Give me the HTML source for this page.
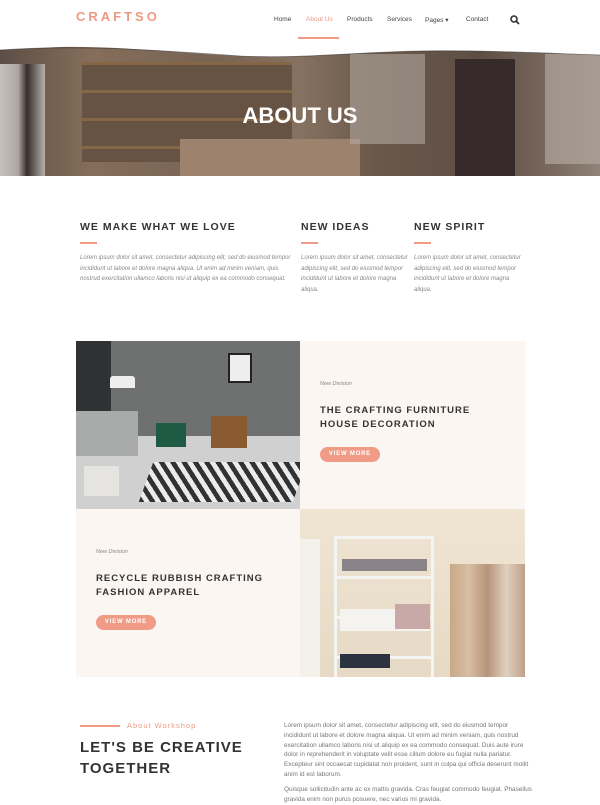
<!DOCTYPE html>
<html><head><meta charset="utf-8"><style>
*{margin:0;padding:0;box-sizing:border-box}
body{width:600px;height:800px;overflow:hidden;background:#fff;font-family:"Liberation Sans",sans-serif;position:relative}
.abs{position:absolute}
.logo{left:76px;top:9px;font-size:13px;font-weight:bold;letter-spacing:3px;color:#ee9a84}
.nav{top:16px;font-size:6.5px;color:#444}
.h{font-weight:bold;color:#333;letter-spacing:1px}
.p{font-style:italic;font-size:6px;line-height:10.5px;color:#888}
.bar{height:2px;background:#ee9a84;width:17px}
.btn{background:#ef9b86;color:#fff;font-size:6px;font-weight:bold;letter-spacing:.8px;border-radius:8px;width:60px;height:15px;line-height:15px;text-align:center}
.small{font-style:italic;font-size:5.5px;color:#888}
</style></head><body>
<div class="abs logo">CRAFTSO</div>
<div class="abs nav" style="left:274px">Home</div>
<div class="abs nav" style="left:306px;color:#ee9a84">About Us</div>
<div class="abs nav" style="left:347px">Products</div>
<div class="abs nav" style="left:387px">Services</div>
<div class="abs nav" style="left:425px">Pages ▾</div>
<div class="abs nav" style="left:466px">Contact</div>
<svg class="abs" style="left:510px;top:15px" width="10" height="10" viewBox="0 0 10 10"><circle cx="4" cy="4" r="3" fill="none" stroke="#333" stroke-width="1.6"/><path d="M6.2 6.2L9 9" stroke="#333" stroke-width="1.8"/></svg>
<div class="abs" style="left:298px;top:37px;width:41px;height:2px;background:#ee9a84"></div>
<!-- hero -->
<div class="abs" style="left:0;top:44px;width:600px;height:132px;background:linear-gradient(90deg,#6a5a50 0%,#9a8068 15%,#8b7360 35%,#9c8570 50%,#7b6756 62%,#6a5a4e 80%,#8c7a6c 92%,#a89a8c 100%);overflow:hidden">
 <div class="abs" style="left:0;top:20px;width:45px;height:112px;background:linear-gradient(90deg,#e8e4e0,#cfc6c0 40%,#3a3230 60%,#d8d2cc)"></div>
 <div class="abs" style="left:82px;top:18px;width:210px;height:100px;background:repeating-linear-gradient(180deg,#9a7850 0 3px,#76604e 3px 28px)"></div>
 <div class="abs" style="left:180px;top:95px;width:180px;height:37px;background:#b89a80"></div>
 <div class="abs" style="left:350px;top:10px;width:75px;height:90px;background:#cfc7bd;opacity:.6"></div>
 <div class="abs" style="left:455px;top:15px;width:60px;height:117px;background:#3a2e2e"></div>
 <div class="abs" style="left:545px;top:10px;width:55px;height:110px;background:#d0c6bc;opacity:.7"></div>
 <div class="abs" style="left:0;top:0;width:600px;height:132px;background:rgba(40,30,25,.18)"></div>
</div>
<svg class="abs" style="left:0;top:43px" width="600" height="18" viewBox="0 0 600 18"><path d="M0 0H600V12C540 10 480 7 420 8C360 9 300 16 240 13C180 10 120 3 60 4C40 5 20 6 0 7Z" fill="#fff"/><path d="M0 7C60 3 120 4 240 13C300 16 360 9 420 8C480 7 540 10 600 12" stroke="#333" stroke-width=".8" fill="none" opacity=".6"/></svg>
<div class="abs" style="left:0;top:103px;width:600px;text-align:center;color:#fff;font-size:22px;font-weight:bold">ABOUT US</div>
<!-- features -->
<div class="abs h" style="left:80px;top:221px;font-size:10.5px">WE MAKE WHAT WE LOVE</div>
<div class="abs h" style="left:301px;top:221px;font-size:10.5px">NEW IDEAS</div>
<div class="abs h" style="left:414px;top:221px;font-size:10.5px">NEW SPIRIT</div>
<div class="abs bar" style="left:80px;top:242px"></div>
<div class="abs bar" style="left:301px;top:242px"></div>
<div class="abs bar" style="left:414px;top:242px"></div>
<div class="abs p" style="left:80px;top:253px;width:215px">Lorem ipsum dolor sit amet, consectetur adipiscing elit, sed do eiusmod tempor incididunt ut labore et dolore magna aliqua. Ut enim ad minim veniam, quis nostrud exercitation ullamco laboris nisi ut aliquip ex ea commodo consequat.</div>
<div class="abs p" style="left:301px;top:253px;width:108px">Lorem ipsum dolor sit amet, consectetur adipiscing elit, sed do eiusmod tempor incididunt ut labore et dolore magna aliqua.</div>
<div class="abs p" style="left:414px;top:253px;width:108px">Lorem ipsum dolor sit amet, consectetur adipiscing elit, sed do eiusmod tempor incididunt ut labore et dolore magna aliqua.</div>
<!-- grid -->
<div class="abs" style="left:76px;top:341px;width:224px;height:168px;background:#6f7171;overflow:hidden">
 <div class="abs" style="left:0;top:0;width:35px;height:110px;background:#2f3233"></div>
 <div class="abs" style="left:0;top:95px;width:224px;height:73px;background:#cfd0cf"></div>
 <div class="abs" style="left:0;top:70px;width:62px;height:45px;background:#a9aaaa"></div>
 <div class="abs" style="left:80px;top:82px;width:30px;height:24px;background:#1f5a44"></div>
 <div class="abs" style="left:135px;top:75px;width:36px;height:32px;background:#8a5a30"></div>
 <div class="abs" style="left:152px;top:12px;width:24px;height:30px;background:#eee;border:2px solid #222"></div>
 <div class="abs" style="left:34px;top:35px;width:25px;height:12px;background:#eee;border-radius:3px 3px 0 0"></div>
 <div class="abs" style="left:70px;top:121px;width:154px;height:40px;background:repeating-linear-gradient(45deg,#222 0 4px,#eee 4px 8px),#eee;transform:skewX(-20deg);opacity:.9"></div>
 <div class="abs" style="left:8px;top:125px;width:35px;height:30px;background:#e6e4e0"></div>
</div>
<div class="abs" style="left:300px;top:341px;width:225px;height:168px;background:#fcf6f2"></div>
<div class="abs small" style="left:320px;top:381px">New Division</div>
<div class="abs h" style="left:320px;top:404px;font-size:9.5px;line-height:14px">THE CRAFTING FURNITURE<br>HOUSE DECORATION</div>
<div class="abs btn" style="left:320px;top:447px">VIEW MORE</div>
<div class="abs" style="left:76px;top:509px;width:224px;height:168px;background:#fcf6f2"></div>
<div class="abs small" style="left:96px;top:549px">New Division</div>
<div class="abs h" style="left:96px;top:572px;font-size:9.5px;line-height:14px">RECYCLE RUBBISH CRAFTING<br>FASHION APPAREL</div>
<div class="abs btn" style="left:96px;top:615px">VIEW MORE</div>
<div class="abs" style="left:300px;top:509px;width:225px;height:168px;background:linear-gradient(180deg,#efe5d2,#e6dac6);overflow:hidden">
 <div class="abs" style="left:0;top:30px;width:20px;height:138px;background:#f4f0ea"></div>
 <div class="abs" style="left:34px;top:27px;width:100px;height:141px;border-left:3px solid #f4f4f2;border-right:3px solid #f4f4f2;background:repeating-linear-gradient(180deg,#f4f4f2 0 3px,transparent 3px 40px)"></div>
 <div class="abs" style="left:42px;top:50px;width:85px;height:12px;background:#8a8488"></div>
 <div class="abs" style="left:40px;top:100px;width:90px;height:22px;background:#f5f3f0"></div>
 <div class="abs" style="left:95px;top:95px;width:35px;height:25px;background:#c9a8a8"></div>
 <div class="abs" style="left:40px;top:145px;width:50px;height:14px;background:#2c3340"></div>
 <div class="abs" style="left:150px;top:55px;width:75px;height:113px;background:linear-gradient(90deg,#c8a888,#d8bea4,#b89478,#e0d0c0,#c0a088)"></div>
</div>
<!-- bottom -->
<div class="abs" style="left:80px;top:725px;width:40px;height:2px;background:#ee9a84"></div>
<div class="abs" style="left:127px;top:721px;font-size:7.5px;color:#ee9a84;letter-spacing:1px">About Workshop</div>
<div class="abs h" style="left:80px;top:737px;font-size:15px;line-height:21px">LET'S BE CREATIVE<br>TOGETHER</div>
<div class="abs" style="left:284px;top:721px;width:250px;font-size:6.4px;line-height:9.8px;color:#777">Lorem ipsum dolor sit amet, consectetur adipiscing elit, sed do eiusmod tempor incididunt ut labore et dolore magna aliqua. Ut enim ad minim veniam, quis nostrud exercitation ullamco laboris nisi ut aliquip ex ea commodo consequat. Duis aute irure dolor in reprehenderit in voluptate velit esse cillum dolore eu fugiat nulla pariatur. Excepteur sint occaecat cupidatat non proident, sunt in culpa qui officia deserunt mollit anim id est laborum.</div>
<div class="abs" style="left:284px;top:785px;width:250px;font-size:6.4px;line-height:9.8px;color:#777">Quisque sollicitudin ante ac ex mattis gravida. Cras feugiat commodo feugiat. Phasellus gravida enim non purus posuere, nec varius mi gravida.</div>
</body></html>
